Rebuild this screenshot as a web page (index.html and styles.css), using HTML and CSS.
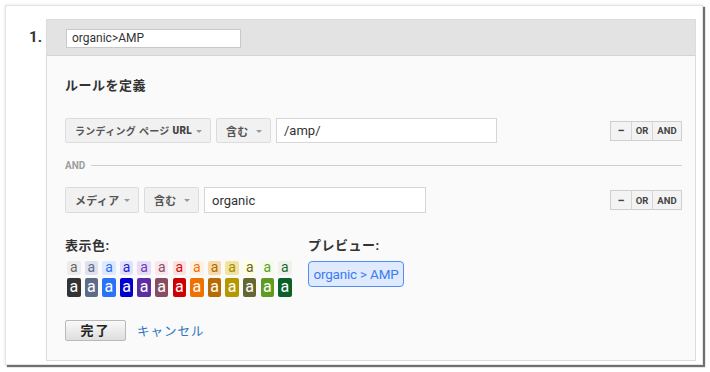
FILE: index.html
```html
<!DOCTYPE html>
<html lang="ja">
<head>
<meta charset="utf-8">
<link rel="stylesheet" href="styles.css">
</head>
<body>
<div class="card">
  <div class="num">1.</div>
  <div class="panel">
    <div class="panel-head">
      <div class="name-input">organic&gt;AMP</div>
    </div>
    <div class="panel-body">
      <div class="title">ルールを定義</div>
      <div class="rule-row">
        <div class="dd dd-dim">ランディング ページ <b>URL</b><span class="caret"></span></div>
        <div class="dd dd-op">含む<span class="caret"></span></div>
        <div class="txt txt-1">/amp/</div>
        <div class="ops"><span class="op op-minus">−</span><span class="op">OR</span><span class="op op-and">AND</span></div>
      </div>
      <div class="and-sep"><span class="and-label">AND</span><span class="and-line"></span></div>
      <div class="rule-row row-2">
        <div class="dd dd-dim2">メディア<span class="caret"></span></div>
        <div class="dd dd-op">含む<span class="caret"></span></div>
        <div class="txt txt-2">organic</div>
        <div class="ops"><span class="op op-minus">−</span><span class="op">OR</span><span class="op op-and">AND</span></div>
      </div>
      <div class="style-row">
        <div class="colors">
          <div class="label">表示色:</div>
          <div class="swatches">
            <span class="sw l c1">a</span><span class="sw l c2">a</span><span class="sw l c3">a</span><span class="sw l c4">a</span><span class="sw l c5">a</span><span class="sw l c6">a</span><span class="sw l c7">a</span><span class="sw l c8">a</span><span class="sw l c9">a</span><span class="sw l c10">a</span><span class="sw l c11">a</span><span class="sw l c12">a</span><span class="sw l c13">a</span>
            <span class="sw d d1">a</span><span class="sw d d2">a</span><span class="sw d d3">a</span><span class="sw d d4">a</span><span class="sw d d5">a</span><span class="sw d d6">a</span><span class="sw d d7">a</span><span class="sw d d8">a</span><span class="sw d d9">a</span><span class="sw d d10">a</span><span class="sw d d11">a</span><span class="sw d d12">a</span><span class="sw d d13">a</span>
          </div>
        </div>
        <div class="preview">
          <div class="label">プレビュー:</div>
          <div class="preview-box">organic &gt; AMP</div>
        </div>
      </div>
      <div class="actions">
        <button class="done">完了</button>
        <a class="cancel">キャンセル</a>
      </div>
    </div>
  </div>
</div>
</body>
</html>
```
FILE: styles.css
```css
* { box-sizing: border-box; }
html, body { margin: 0; padding: 0; background: #ffffff; }
body {
  font-family: Roboto, "Noto Sans CJK JP", "Noto Sans", sans-serif;
  color: #333;
  width: 710px;
  height: 372px;
  overflow: hidden;
}
.card {
  margin: 5px 0 0 5px;
  width: 698px;
  height: 360px;
  background: #fff;
  border: 1px solid #e4e4e4;
  box-shadow: 2px 2px 1px rgba(0,0,0,0.55), 0 0 3px rgba(0,0,0,0.12);
  display: flex;
}
.num {
  width: 40px;
  padding-top: 22px;
  padding-right: 4px;
  text-align: right;
  font-size: 15px;
  font-weight: bold;
  color: #333;
}
.panel {
  margin-top: 13px;
  width: 650px;
  height: 342px;
  border: 1px solid #dcdcdc;
  background: #fafafa;
  display: flex;
  flex-direction: column;
}
.panel-head {
  height: 36px;
  background: #e3e3e3;
  border-bottom: 1px solid #d4d4d4;
  padding: 9px 0 0 19px;
}
.name-input {
  width: 175px;
  height: 19px;
  background: #fff;
  border: 1px solid #c9c9c9;
  font-size: 12px;
  line-height: 17px;
  padding-left: 5px;
  color: #333;
}
.panel-body {
  padding: 21px 13px 0 18px;
}
.title {
  font-size: 13px;
  font-weight: bold;
  line-height: 18px;
  color: #333;
  letter-spacing: 0.5px;
}
.rule-row {
  margin-top: 23px;
  height: 25px;
  display: flex;
  align-items: center;
}
.row-2 { margin-top: 0; height: 26px; }
.row-2 .dd, .row-2 .txt { height: 26px; }
.dd {
  height: 25px;
  background: #f1f1f1;
  border: 1px solid #dcdcdc;
  border-radius: 2px;
  font-size: 10px;
  font-weight: bold;
  color: #555;
  display: flex;
  align-items: center;
  padding-left: 9px;
  position: relative;
  margin-right: 5px;
  white-space: nowrap;
  letter-spacing: 0.3px;
}
.dd b { margin-left: 3px; color: #444; }
.dd-dim { width: 146px; }
.dd-dim2 { width: 74px; }
.dd-op { width: 55px; font-size: 11px; }
.dd-dim2 { font-size: 11px; }
.caret {
  position: absolute;
  right: 8px;
  top: 11px;
  width: 0; height: 0;
  border-left: 3px solid transparent;
  border-right: 3px solid transparent;
  border-top: 3.5px solid #999;
}
.txt {
  height: 25px;
  background: #fff;
  border: 1px solid #d6d6d6;
  font-size: 13px;
  color: #333;
  padding-left: 7px;
  display: flex;
  align-items: center;
}
.txt-1 { width: 221px; }
.txt-2 { width: 222px; }
.ops {
  margin-left: auto;
  display: flex;
  height: 20px;
  border: 1px solid #cfcfcf;
  background: #f3f3f3;
}
.op {
  height: 18px;
  width: 21px;
  display: flex;
  align-items: center;
  justify-content: center;
  font-size: 9.5px;
  font-weight: bold;
  color: #444;
  border-left: 1px solid #d6d6d6;
}
.op-minus { border-left: none; font-size: 13px; width: 20px; }
.op-and { width: 29px; }
.and-sep {
  height: 44px;
  display: flex;
  align-items: center;
}
.and-label {
  font-size: 10px;
  font-weight: bold;
  color: #9e9e9e;
  margin-right: 6px;
}
.and-line {
  flex: 1;
  height: 1px;
  background: #cfcfcf;
}
.style-row {
  margin-top: 24px;
  display: flex;
}
.colors { width: 243px; }
.label {
  font-size: 13px;
  font-weight: bold;
  line-height: 18px;
  color: #333;
  letter-spacing: 0.5px;
}
.swatches {
  margin-top: 6px;
  margin-left: 2px;
  display: grid;
  grid-template-columns: repeat(13, 13.5px);
  column-gap: 4.1px;
  row-gap: 3px;
  grid-template-rows: 14px 19px;
}
.sw {
  border-radius: 2px;
  line-height: 1;
  display: flex;
  align-items: center;
  justify-content: center;
  font-family: Roboto, sans-serif;
}
.sw.l { font-size: 14px; padding-bottom: 2px; }
.sw.d { color: #fff; font-size: 16px; padding-bottom: 1px; }
.c1 { background: #ececec; color: #666; }
.c2 { background: #dde2ee; color: #5d6b8a; }
.c3 { background: #dde9ff; color: #2c6ff6; }
.c4 { background: #e1e1ff; color: #2222cc; }
.c5 { background: #e6dcf8; color: #6b40b0; }
.c6 { background: #fbe5ee; color: #8a5068; }
.c7 { background: #fde0e0; color: #cc1010; }
.c8 { background: #fff0e1; color: #f07000; }
.c9 { background: #f8d9ab; color: #b06a00; }
.c10 { background: #f1e3a0; color: #a48b00; }
.c11 { background: #ffffd9; color: #646438; }
.c12 { background: #f4fbe9; color: #5c9b2a; }
.c13 { background: #eef2ea; color: #1a6b32; }
.d1 { background: #333333; }
.d2 { background: #5c6b8a; }
.d3 { background: #2a72f8; }
.d4 { background: #0000cc; }
.d5 { background: #5b2fa0; }
.d6 { background: #864d62; }
.d7 { background: #cc0000; }
.d8 { background: #f07000; }
.d9 { background: #b76b00; }
.d10 { background: #b59700; }
.d11 { background: #666633; }
.d12 { background: #5e9b20; }
.d13 { background: #0b6129; }
.preview-box {
  margin-top: 6px;
  width: 96px;
  height: 26px;
  background: #dfeaff;
  border: 1.5px solid #4f8ef5;
  border-radius: 4px;
  color: #3b7cf0;
  font-size: 13.5px;
  display: flex;
  align-items: center;
  justify-content: center;
  white-space: nowrap;
  letter-spacing: -0.2px;
}
.actions {
  margin-top: 23px;
  display: flex;
  align-items: center;
}
.done {
  width: 61px;
  height: 21px;
  border: 1px solid #b9b9b9;
  border-radius: 2px;
  background: linear-gradient(#f9f9f9, #dedede);
  font-family: inherit;
  font-size: 13px;
  font-weight: bold;
  color: #222;
  padding: 0;
  line-height: 18px;
  letter-spacing: 2px;
}
.cancel {
  margin-left: 11px;
  font-size: 12.5px;
  color: #2a74c0;
  letter-spacing: 1px;
}
```
